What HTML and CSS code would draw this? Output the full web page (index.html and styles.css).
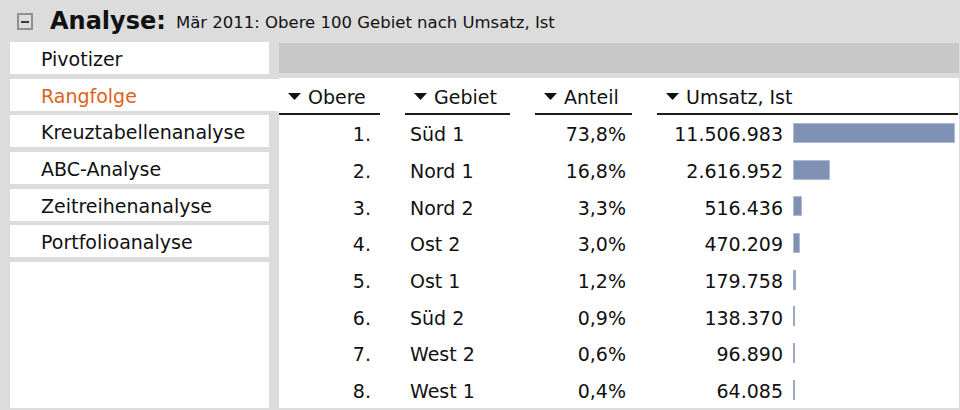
FILE: index.html
```html
<!DOCTYPE html>
<html lang="de">
<head>
<meta charset="utf-8">
<title>Analyse</title>
<link rel="stylesheet" href="styles.css">
</head>
<body>
<header class="header">
  <span class="collapse"><span class="collapse-bar"></span></span>
  <span class="title">Analyse:</span>
  <span class="subtitle">Mär 2011: Obere 100 Gebiet nach Umsatz, Ist</span>
</header>
<div class="main">
  <nav class="sidebar">
    <div class="item">Pivotizer</div>
    <div class="item active">Rangfolge</div>
    <div class="item">Kreuztabellenanalyse</div>
    <div class="item">ABC-Analyse</div>
    <div class="item">Zeitreihenanalyse</div>
    <div class="item">Portfolioanalyse</div>
    <div class="filler"></div>
  </nav>
  <section class="content">
    <div class="toolbar"></div>
    <div class="table">
      <div class="th"><svg class="tri" width="13" height="7" viewBox="0 0 13 7"><path d="M0 0H13L6.5 7Z"/></svg>Obere</div>
      <div class="th"><svg class="tri" width="13" height="7" viewBox="0 0 13 7"><path d="M0 0H13L6.5 7Z"/></svg>Gebiet</div>
      <div class="th"><svg class="tri" width="13" height="7" viewBox="0 0 13 7"><path d="M0 0H13L6.5 7Z"/></svg>Anteil</div>
      <div class="th"><svg class="tri" width="13" height="7" viewBox="0 0 13 7"><path d="M0 0H13L6.5 7Z"/></svg>Umsatz, Ist</div>

      <div class="td num">1.</div><div class="td name">Süd 1</div><div class="td pct">73,8%</div><div class="td val"><span class="amount">11.506.983</span><span class="bar" style="width:162px"></span></div>
      <div class="td num">2.</div><div class="td name">Nord 1</div><div class="td pct">16,8%</div><div class="td val"><span class="amount">2.616.952</span><span class="bar" style="width:37px"></span></div>
      <div class="td num">3.</div><div class="td name">Nord 2</div><div class="td pct">3,3%</div><div class="td val"><span class="amount">516.436</span><span class="bar" style="width:9px"></span></div>
      <div class="td num">4.</div><div class="td name">Ost 2</div><div class="td pct">3,0%</div><div class="td val"><span class="amount">470.209</span><span class="bar" style="width:7px"></span></div>
      <div class="td num">5.</div><div class="td name">Ost 1</div><div class="td pct">1,2%</div><div class="td val"><span class="amount">179.758</span><span class="bar thin" style="width:2.5px"></span></div>
      <div class="td num">6.</div><div class="td name">Süd 2</div><div class="td pct">0,9%</div><div class="td val"><span class="amount">138.370</span><span class="bar thin" style="width:2px"></span></div>
      <div class="td num">7.</div><div class="td name">West 2</div><div class="td pct">0,6%</div><div class="td val"><span class="amount">96.890</span><span class="bar thin" style="width:2px"></span></div>
      <div class="td num">8.</div><div class="td name">West 1</div><div class="td pct">0,4%</div><div class="td val"><span class="amount">64.085</span><span class="bar thin" style="width:2px"></span></div>
    </div>
  </section>
</div>
</body>
</html>
```
FILE: styles.css
```css
* { box-sizing: border-box; }
html, body {
  margin: 0;
  padding: 0;
  width: 960px;
  height: 410px;
  overflow: hidden;
}
body {
  background: #dcdcdc;
  font-family: "DejaVu Sans", Verdana, sans-serif;
  font-size: 19px;
  color: #111;
}
.header {
  height: 42px;
  display: flex;
  align-items: center;
  padding-left: 17px;
}
.collapse {
  width: 16px;
  height: 17px;
  border: 2px solid #909090;
  display: flex;
  align-items: center;
  justify-content: center;
  margin-right: 17px;
  margin-top: 1px;
}
.collapse-bar {
  width: 8px;
  height: 2px;
  background: #3a3a3a;
}
.title {
  font-weight: bold;
  font-size: 24px;
  color: #111;
}
.subtitle {
  font-size: 16.5px;
  margin-left: 10px;
  padding-top: 2px;
}
.main {
  display: flex;
  gap: 10px;
  height: 368px;
  padding: 0 0 2px 10px;
}
.sidebar {
  width: 259px;
  display: flex;
  flex-direction: column;
}
.item {
  height: 32px;
  line-height: 35px;
  margin-bottom: 4.7px;
  padding-left: 31px;
  background: #fff;
  white-space: nowrap;
}
.item.active {
  width: 269px;
  color: #e0601c;
}
.filler {
  flex: 1;
  background: #fff;
}
.content {
  width: 680px;
  display: flex;
  flex-direction: column;
}
.toolbar {
  height: 31px;
  margin-top: 1px;
  margin-bottom: 5px;
  background: #c8c8c8;
}
.table {
  flex: 1;
  background: #fff;
  display: grid;
  grid-template-columns: 101px 105px 97px 301px;
  grid-template-rows: 37px;
  grid-auto-rows: 36.7px;
  column-gap: 25px;
  align-content: start;
}
.th {
  display: flex;
  align-items: center;
  padding-left: 9px;
  padding-top: 3px;
  border-bottom: 2px solid #1c1c1c;
  white-space: nowrap;
}
.tri {
  fill: #111;
  margin-right: 7px;
  flex: none;
}
.td {
  display: flex;
  align-items: center;
  white-space: nowrap;
}
.num, .name, .pct, .amount { padding-top: 3px; }
.num { justify-content: flex-end; padding-right: 9px; }
.name { padding-left: 5px; }
.pct { justify-content: flex-end; padding-right: 6px; }
.amount {
  width: 126px;
  text-align: right;
  margin-right: 10px;
  flex: none;
}
.bar {
  height: 20px;
  background: #7f92b6;
  border: 1px solid #aebbd3;
  flex: none;
}
.bar.thin {
  border: none;
  background: #9aaac6;
}
```
